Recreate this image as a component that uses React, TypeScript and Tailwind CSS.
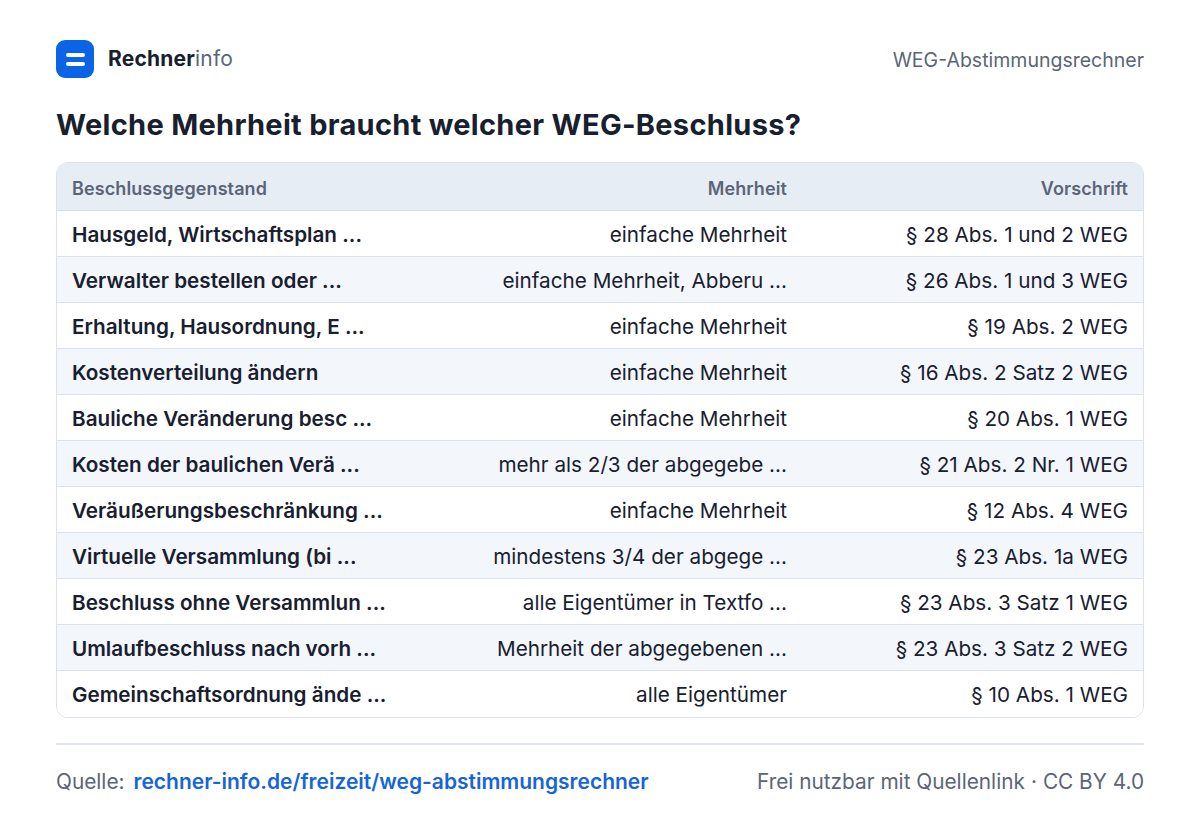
import React from "react";

interface Row {
  subject: string;
  majority: string;
  rule: string;
}

const rows: Row[] = [
  { subject: "Hausgeld, Wirtschaftsplan ...", majority: "einfache Mehrheit", rule: "§ 28 Abs. 1 und 2 WEG" },
  { subject: "Verwalter bestellen oder ...", majority: "einfache Mehrheit, Abberu ...", rule: "§ 26 Abs. 1 und 3 WEG" },
  { subject: "Erhaltung, Hausordnung, E ...", majority: "einfache Mehrheit", rule: "§ 19 Abs. 2 WEG" },
  { subject: "Kostenverteilung ändern", majority: "einfache Mehrheit", rule: "§ 16 Abs. 2 Satz 2 WEG" },
  { subject: "Bauliche Veränderung besc ...", majority: "einfache Mehrheit", rule: "§ 20 Abs. 1 WEG" },
  { subject: "Kosten der baulichen Verä ...", majority: "mehr als 2/3 der abgegebe ...", rule: "§ 21 Abs. 2 Nr. 1 WEG" },
  { subject: "Veräußerungsbeschränkung ...", majority: "einfache Mehrheit", rule: "§ 12 Abs. 4 WEG" },
  { subject: "Virtuelle Versammlung (bi ...", majority: "mindestens 3/4 der abgege ...", rule: "§ 23 Abs. 1a WEG" },
  { subject: "Beschluss ohne Versammlun ...", majority: "alle Eigentümer in Textfo ...", rule: "§ 23 Abs. 3 Satz 1 WEG" },
  { subject: "Umlaufbeschluss nach vorh ...", majority: "Mehrheit der abgegebenen ...", rule: "§ 23 Abs. 3 Satz 2 WEG" },
  { subject: "Gemeinschaftsordnung ände ...", majority: "alle Eigentümer", rule: "§ 10 Abs. 1 WEG" },
];

const Logo = () => (
  <div className="w-[38px] h-[38px] rounded-[9px] bg-[#0b63e5] flex flex-col items-center justify-center gap-[5px]">
    <div className="w-[19px] h-[4px] rounded-full bg-white" />
    <div className="w-[19px] h-[4px] rounded-full bg-white" />
  </div>
);

export default function App() {
  return (
    <div
      className="w-[1200px] h-[822px] bg-white px-[56px] pt-[40px] text-[#18202f]"
      style={{ fontFamily: "Inter, 'Noto Sans', sans-serif" }}
    >
      <div className="flex items-center justify-between h-[38px]">
        <div className="flex items-center gap-[14px]">
          <Logo />
          <div className="text-[21px] tracking-[0.2px]">
            <span className="font-bold text-[#18202f]">Rechner</span>
            <span className="text-[#5b6577]">info</span>
          </div>
        </div>
        <div className="text-[19.5px] text-[#5b6577] mt-[4px]">WEG-Abstimmungsrechner</div>
      </div>

      <h1 className="mt-[29px] text-[29px] leading-[36px] font-bold tracking-[0.3px] text-[#18202f]">
        Welche Mehrheit braucht welcher WEG-Beschluss?
      </h1>

      <div className="mt-[19px] border border-[#dbe2ec] rounded-[12px] overflow-hidden">
        <div className="grid grid-cols-[400px_346px_1fr] h-[48px] items-center pt-[3px] bg-[#e7edf5] border-b border-[#d5dde8] text-[18px] font-semibold text-[#5b6577] tracking-[0.1px]">
          <div className="pl-[15px]">Beschlussgegenstand</div>
          <div className="text-right pr-[16px]">Mehrheit</div>
          <div className="text-right pr-[15px]">Vorschrift</div>
        </div>
        {rows.map((r, i) => (
          <div
            key={i}
            className={
              "grid grid-cols-[400px_346px_1fr] h-[46px] items-center text-[20.7px] pt-[2px] " +
              (i % 2 === 1 ? "bg-[#f3f6fb] " : "bg-white ") +
              (i < rows.length - 1 ? "border-b border-[#dbe2ec]" : "")
            }
          >
            <div className="pl-[15px] font-semibold text-[#18202f] whitespace-nowrap">{r.subject}</div>
            <div className="text-right pr-[16px] text-[#18202f] whitespace-nowrap">{r.majority}</div>
            <div className="text-right pr-[15px] text-[#18202f] whitespace-nowrap">{r.rule}</div>
          </div>
        ))}
      </div>

      <div className="mt-[25px] border-t-2 border-[#e2e7ee]" />

      <div className="mt-[21px] flex items-center justify-between text-[20.8px]">
        <div className="flex items-center gap-[9px]">
          <span className="text-[#5b6577]">Quelle:</span>
          <span className="font-semibold text-[#1565d8] text-[21px]">rechner-info.de/freizeit/weg-abstimmungsrechner</span>
        </div>
        <div className="text-[#5b6577]">
          Frei nutzbar mit Quellenlink<span className="mx-[6px]">·</span>CC BY 4.0
        </div>
      </div>
    </div>
  );
}
